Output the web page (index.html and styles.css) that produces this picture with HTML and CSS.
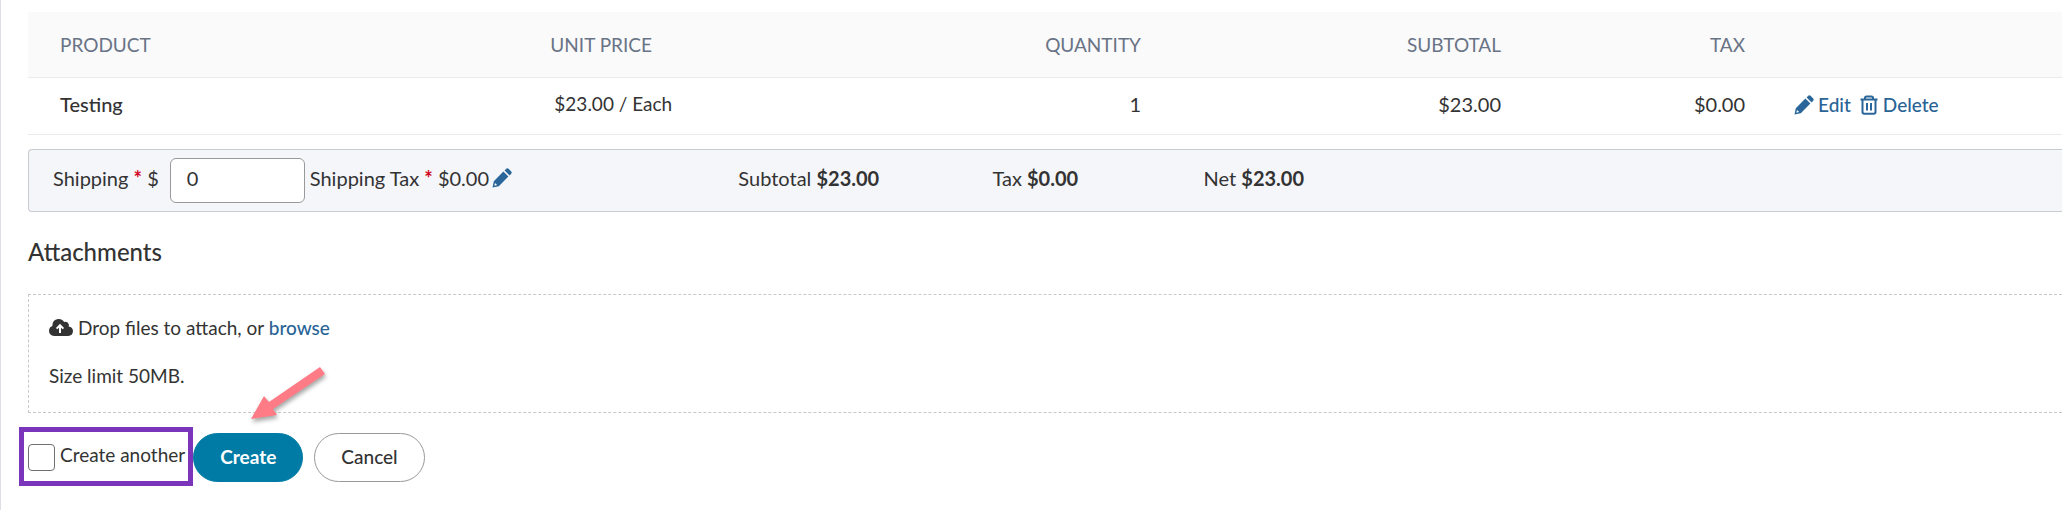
FILE: index.html
```html
<!DOCTYPE html>
<html lang="en">
<head>
<meta charset="utf-8">
<title>Create order</title>
<link rel="stylesheet" href="styles.css">
</head>
<body>
<svg class="defs" aria-hidden="true">
  <symbol id="pencil" viewBox="0 0 20 20">
    <path d="M.5 19.500 1.800 13.200 11.400 3.600 16.400 8.600 6.800 18.200zM12.600 2.400 14.200.8Q15.400-.3 16.600.8L19.200 3.400Q20.300 4.600 19.200 5.800L17.600 7.400z"/>
    <path class="nib" d="M2.300 17.700 3 14.900 5.100 17z"/>
  </symbol>
</svg>
<main class="page">
  <table class="items">
    <colgroup><col class="col-product"><col class="col-price"><col class="col-quantity"><col class="col-subtotal"><col class="col-tax"><col></colgroup>
    <thead>
      <tr><th>PRODUCT</th><th>UNIT PRICE</th><th class="num">QUANTITY</th><th class="num">SUBTOTAL</th><th class="num">TAX</th><th></th></tr>
    </thead>
    <tbody>
      <tr>
        <td class="name">Testing</td><td class="price">$23.00 / Each</td><td class="num">1</td><td class="num">$23.00</td><td class="num">$0.00</td>
        <td><div class="actions">
          <a class="link" href="#edit"><svg class="icon"><use href="#pencil"/></svg>Edit</a>
          <a class="link" href="#delete"><svg class="icon trash" viewBox="0 0 20 20"><path d="M1.500 4.500h17M6 4.500V3q0-1.500 1.500-1.500h5Q14 1.500 14 3v1.500M3.500 5v12q0 1.800 1.800 1.800h9.400q1.800 0 1.800-1.800V5M8 8v7.500M12 8v7.500"/></svg>Delete</a>
        </div></td>
      </tr>
    </tbody>
  </table>

  <section class="summary">
    <div class="shipping">
      <label class="figure" for="shipping">Shipping <span class="required">*</span> $</label>
      <input class="amount" id="shipping" type="text" value="0">
      <span class="figure">Shipping Tax <span class="required">*</span> $0.00</span>
      <button class="icon-button" type="button" aria-label="Edit shipping tax"><svg class="icon"><use href="#pencil"/></svg></button>
    </div>
    <div class="figure">Subtotal <strong>$23.00</strong></div>
    <div class="figure">Tax <strong>$0.00</strong></div>
    <div class="figure">Net <strong>$23.00</strong></div>
  </section>

  <h2 class="heading">Attachments</h2>
  <section class="dropzone">
    <p class="drop"><svg class="cloud" viewBox="0 0 24 17"><path d="M5.200 17Q0 16.400 0 11.800 0 8.200 3.400 7 3.200 1 9 .1q4-.4 6.200 3 3.700-1.200 4.600 2.400.3 1-.2 1.900Q24 8.200 24 12.200 23.600 16.600 19.200 17z"/><path class="arrow-up" d="M11 14V6.500M7.600 9.600 11 6.200l3.400 3.400"/></svg><span>Drop files to attach, or <a class="link-text" href="#browse">browse</a></span></p>
    <p>Size limit 50MB.</p>
  </section>

  <div class="footer">
    <label class="another"><input class="check" type="checkbox"><span class="figure">Create another</span></label>
    <div class="buttons">
      <button class="button primary" type="submit">Create</button>
      <button class="button" type="button">Cancel</button>
      <svg class="pointer" viewBox="0 0 84 64" aria-hidden="true"><path d="M4 56 17 33 22 39 73 4 78 11 26 46 30 52z"/></svg>
    </div>
  </div>
</main>
</body>
</html>
```
FILE: styles.css
```css
* { box-sizing: border-box; }
body {
  margin: 0;
  background: #fff;
  color: #333;
  font: 20px/24px Lato, "Open Sans", sans-serif;
}
.defs { display: none; }
.page {
  min-height: 100vh;
  padding: 12px 0 24px 27px;
  border-left: 1px solid #dcdfe3;
}
.items { width: 100%; table-layout: fixed; border-collapse: collapse; }
.col-product { width: 24.5%; }
.col-price { width: 14%; }
.col-quantity { width: 17.4%; }
.col-subtotal { width: 17.7%; }
.col-tax { width: 12%; }
.items th, .items td {
  padding: 0 24px;
  border-bottom: 1px solid #ebebeb;
  font-weight: 400;
  text-align: left;
}
.items th:first-child, .items td:first-child { padding-left: 32px; }
.items th { height: 65px; padding-top: 2px; background: #fafafa; color: #697386; font-size: 19px; }
.items td { height: 57px; padding-bottom: 4px; }
.items .num { text-align: right; }
.items .price { padding-left: 28px; font-size: 19px; }
.items .name { font-weight: 500; }
.actions { display: flex; gap: 8px; padding: 2px 0 0 1px; }
.link { display: flex; align-items: center; gap: 4px; color: #2a6496; text-decoration: none; font-size: 19px; font-weight: 500; }
.link-text { color: #2a6496; text-decoration: none; font-weight: 500; }
.icon { display: block; width: 20px; height: 20px; fill: #2a6699; }
.nib { fill: #fff; }
.trash { fill: none; stroke: #2a6699; stroke-width: 2; }
.summary {
  display: grid;
  grid-template-columns: 685fr 254fr 211fr 858fr;
  align-items: center;
  height: 63px;
  margin-top: 14px;
  padding-left: 24px;
  border: 1px solid #c8cbcf;
  border-right: 0;
  border-radius: 4px 0 0 4px;
  background: #f5f6fa;
}
.shipping { display: flex; align-items: center; }
.figure { padding-bottom: 4px; }
.required { color: #d0021b; font-weight: 700; }
.amount {
  width: 135px;
  height: 45px;
  margin: 0 5px 0 11px;
  padding: 0 16px 4px;
  border: 1px solid #999;
  border-radius: 6px;
  background: #fff;
  color: #333;
  font: inherit;
}
.icon-button { margin-left: 3px; padding: 0 0 4px; border: 0; background: none; }
.heading { margin: 23px 0 25px; font-size: 24px; line-height: 34px; font-weight: 500; }
.dropzone { display: grid; align-content: start; gap: 24px; padding: 21px 20px 20px; height: 119px; border: 1px dashed #c8c8c8; border-right: 0; font-size: 19px; }
.dropzone p { margin: 0; }
.drop { display: flex; align-items: center; gap: 5px; }
.cloud { width: 24px; height: 17px; fill: #333; }
.arrow-up { fill: none; stroke: #fff; stroke-width: 2; }
.footer { display: flex; align-items: center; margin: 14px 0 0 -9px; font-size: 19px; }
.another {
  display: flex;
  align-items: center;
  gap: 5px;
  height: 59px;
  padding: 2px 3px 0 4px;
  border: 5px solid #7b35ba;
}
.check {
  appearance: none;
  width: 27px;
  height: 27px;
  margin: 0;
  border: 1px solid #707070;
  border-radius: 4px;
  background: #fff;
}
.buttons { position: relative; display: flex; gap: 11px; padding-top: 2px; }
.button {
  height: 49px;
  padding: 0 26px;
  border: 1px solid #999;
  border-radius: 25px;
  background: #fff;
  color: #333;
  font: inherit;
  font-weight: 500;
}
.primary { border-color: #007ba5; background: #007ba5; color: #fff; font-weight: 700; }
.pointer {
  position: absolute;
  left: 54px;
  bottom: 55px;
  width: 84px;
  height: 64px;
  fill: #ff7b86;
  filter: drop-shadow(1px 3px 2px rgba(0, 0, 0, 0.35));
}
```
